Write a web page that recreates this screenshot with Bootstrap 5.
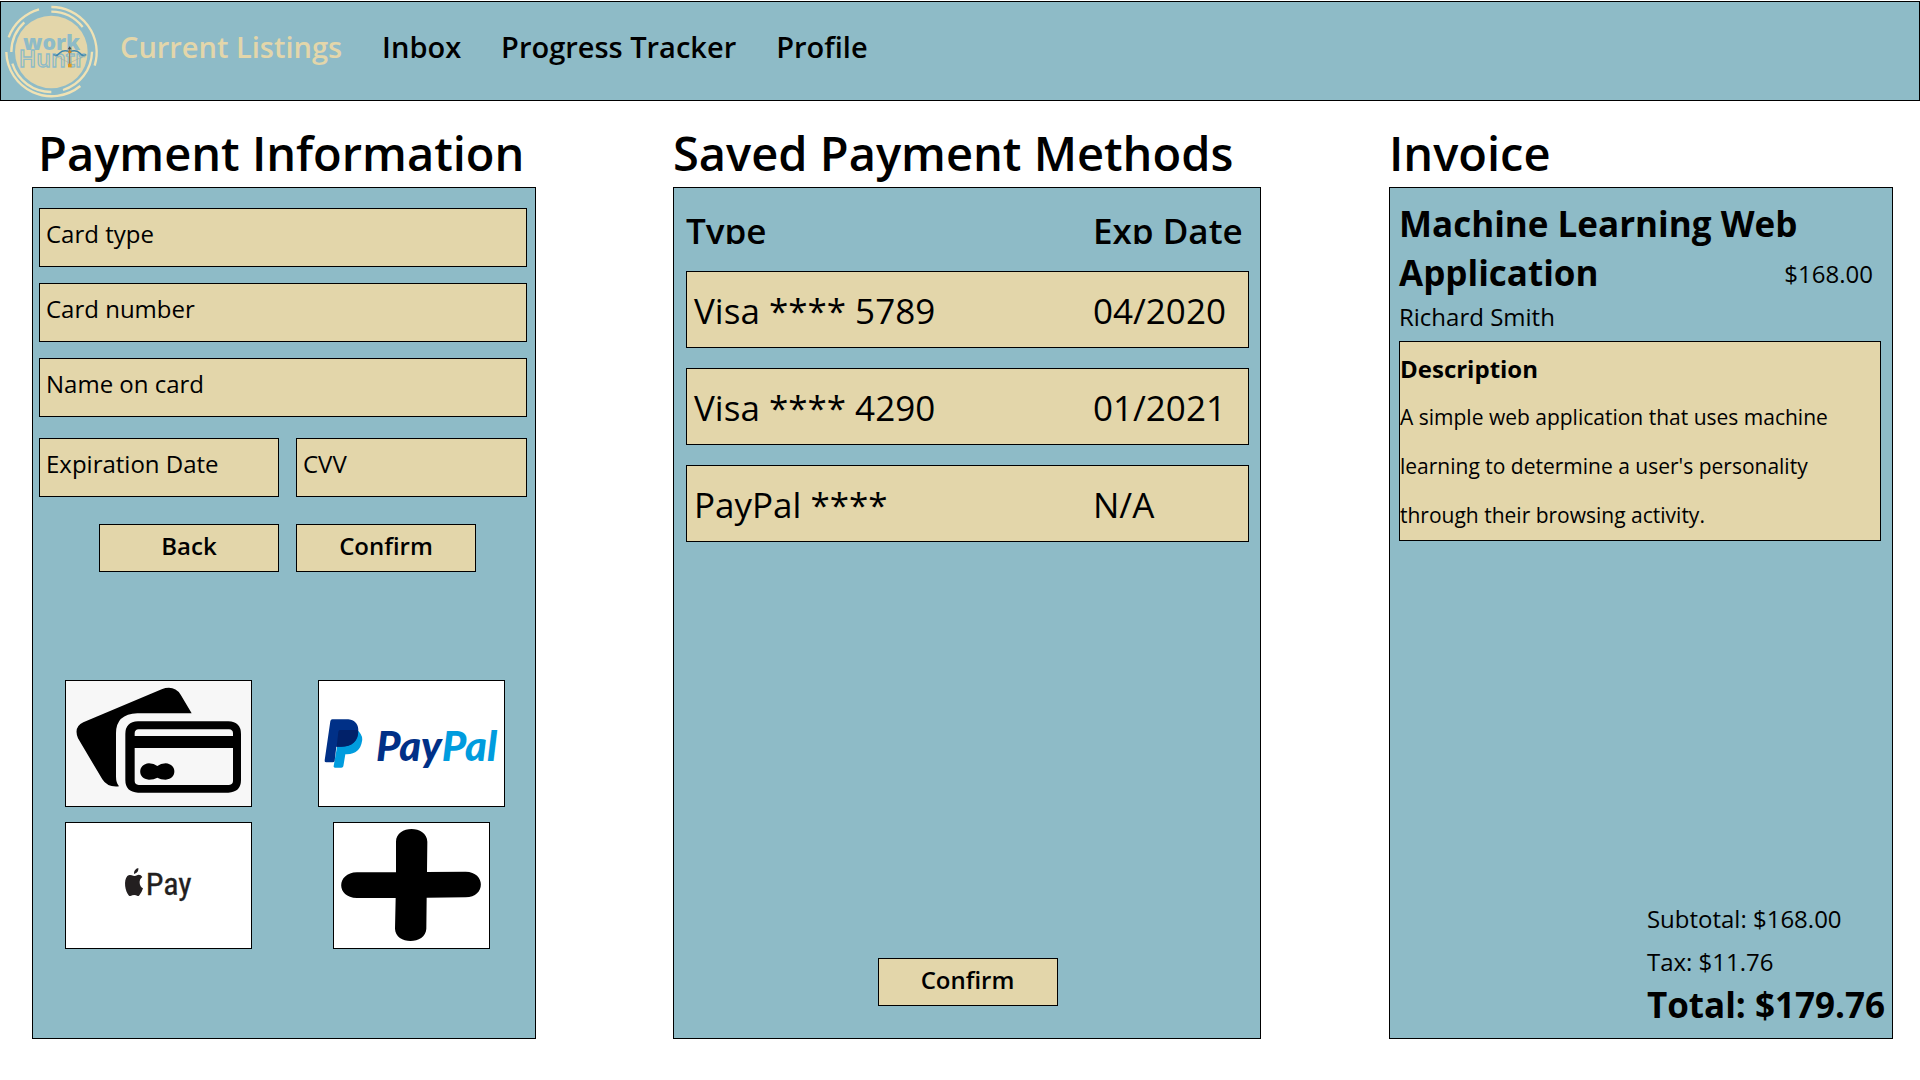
<!DOCTYPE html>
<html lang="en">
<head>
<meta charset="utf-8">
<meta name="viewport" content="width=device-width, initial-scale=1">
<title>workHuntr - Payment</title>
<link href="https://cdn.jsdelivr.net/npm/bootstrap@5.3.0/dist/css/bootstrap.min.css" rel="stylesheet">
<style>
  :root { --teal: #8ebbc7; --sand: #e3d6aa; }
  body { font-family: "Open Sans", "Noto Sans", sans-serif; color: #000; background: #fff; font-size: 24px; line-height: 40px; }
  .site-bar { background: var(--teal); border: 1px solid #000; min-height: 100px; margin-top: 1px; padding: 0 0 0 2px; }
  .site-logo { width: 96px; height: 96px; }
  .site-nav { gap: 40px; margin-left: 21px; padding-bottom: 9px; }
  .site-nav .nav-link { padding: 0; color: #000; font-size: 29px; font-weight: 600; line-height: 40px; }
  .site-nav .nav-link.active { color: var(--sand); }
  .page-main { padding: 20px 27px 42px 32px; }
  .col-side { flex: 504 1 0; min-width: 0; }
  .col-mid { flex: 588 1 0; min-width: 0; margin-left: 137px; margin-right: 128px; }
  .col-title { font-size: 47px; font-weight: 600; line-height: 64px; margin: 0 0 2px; white-space: nowrap; }
  .title-pay { padding-left: 6px; }
  .panel { background: var(--teal); border: 1px solid #000; min-height: calc(100vh - 228px); }
  .panel-pay { padding: 20px 8px 20px 6px; }
  .field, .field:focus { background: var(--sand); border: 1px solid #000; border-radius: 0; height: 59px; padding: 0 8px 8px 6px; font-size: 24px; line-height: 40px; color: #000; box-shadow: none; }
  .field::placeholder { color: #000; opacity: 1; }
  .field-list { gap: 16px; }
  .pair { gap: 17px; }
  .exp-row { padding-top: 5px; }
  .w-exp { flex: 240 1 0; }
  .w-cvv { flex: 231 1 0; }
  .act { background: var(--sand); border: 1px solid #000; border-radius: 0; width: 180px; height: 48px; padding: 0 0 5px; font-size: 24px; font-weight: 600; line-height: 40px; color: #000; }
  .act:hover { background: #d9ca98; border-color: #000; color: #000; }
  .act-row { padding-left: 9px; margin-top: 27px; }
  .tiles { display: grid; grid-template-columns: 187px 187px; gap: 15px 66px; margin-top: 108px; padding-left: 4px; justify-content: center; justify-items: center; }
  .tile { width: 187px; height: 127px; padding: 0; border: 1px solid #000; background: #fff; }
  .tile-plus { width: 157px; }
  .tile-cards { background: #f7f7f7; }
  .tile svg { display: block; width: 100%; height: 100%; }
  .panel-saved { padding: 0 11px 32px 12px; }
  .saved { width: 100%; border-collapse: separate; border-spacing: 0 20px; font-size: 35px; line-height: 73px; }
  .saved th { padding: 0 0 7px; font-weight: 600; }
  .saved th span { display: block; height: 36px; line-height: 46px; overflow: hidden; }
  .saved td { background: var(--sand); border: 1px solid #000; padding: 2px 0 0; }
  .saved td:first-child { border-right: 0; padding-left: 7px; }
  .saved td:last-child { border-left: 0; }
  .saved .exp-col { width: 156px; }
  .panel-inv { padding: 11px 11px 12px 9px; }
  .job { font-size: 35px; font-weight: 700; line-height: 49px; margin: 0; }
  .job .price { font-size: 24px; font-weight: 400; line-height: 51px; height: 49px; margin-right: 8px; }
  .desc { background: var(--sand); border: 1px solid #000; padding: 2px 0 0; margin-top: 4px; font-size: 21px; line-height: 49px; }
  .desc h4 { font-size: 24px; font-weight: 700; line-height: 49px; margin: 0; }
  .sums { margin-right: -4px; line-height: 43px; }
  .sum-total { font-size: 35px; font-weight: 700; }
</style>
<script src="https://cdn.jsdelivr.net/npm/bootstrap@5.3.0/dist/js/bootstrap.bundle.min.js"></script>
</head>
<body>
<header class="site-bar d-flex align-items-center">
  <a href="#" aria-label="workHuntr home" class="d-block">
    <svg class="site-logo d-block" viewBox="10 8 288 288">
      <circle cx="155" cy="155" r="109" fill="#e3d6aa"/>
      <g fill="none" stroke="#f0e2b4" stroke-width="7">
        <path d="M27 111A136 136 0 0 1 118 27"/>
        <path d="M155 20A136 136 0 0 1 285 196"/>
        <path d="M155 34A122 122 0 0 1 249 80"/>
        <path d="M35 155A121 121 0 0 1 74 66"/>
        <path d="M20 155A136 136 0 0 0 242 257"/>
        <path d="M38 190A122 122 0 0 0 155 275"/>
        <path d="M277 154A122 122 0 0 1 190 269"/>
      </g>
      <text x="70" y="148" font-family="Open Sans, sans-serif" font-weight="800" font-size="64" fill="#8ebbc7">work</text>
      <text x="57" y="200" font-family="Open Sans, sans-serif" font-weight="600" font-size="70" fill="#e3d6aa" stroke="#8ebbc7" stroke-width="4">Huntr</text>
      <g fill="none" stroke="#3d86ae" stroke-width="4"><path d="M161 163Q172 169 180 158Q191 147 210 154Q229 147 240 158Q248 169 260 163"/></g>
      <path d="M164 165L210 188L257 165" fill="none" stroke="#9aa59a" stroke-width="1.5"/>
      <path d="M210 142V195" stroke="#9c6a45" stroke-width="3"/>
      <path d="M204 147L210 138L216 147Z" fill="#4b4b4b"/>
      <rect x="206" y="151" width="9" height="7" fill="#c98420"/><rect x="205" y="190" width="11" height="11" fill="#dd9a1c"/>
    </svg>
  </a>
  <nav class="site-nav nav" aria-label="Main">
    <a class="nav-link active" href="#">Current Listings</a>
    <a class="nav-link" href="#">Inbox</a>
    <a class="nav-link" href="#">Progress Tracker</a>
    <a class="nav-link" href="#">Profile</a>
  </nav>
</header>

<main class="page-main d-flex">
  <section class="col-side">
    <h1 class="col-title title-pay">Payment Information</h1>
    <div class="panel panel-pay">
      <form>
        <div class="field-list d-flex flex-column">
          <input class="form-control field" type="text" aria-label="Card type" placeholder="Card type">
          <input class="form-control field" type="text" aria-label="Card number" placeholder="Card number">
          <input class="form-control field" type="text" aria-label="Name on card" placeholder="Name on card">
          <div class="exp-row pair d-flex">
            <div class="w-exp"><input class="form-control field" type="text" aria-label="Expiration Date" placeholder="Expiration Date"></div>
            <div class="w-cvv"><input class="form-control field" type="text" aria-label="CVV" placeholder="CVV"></div>
          </div>
        </div>
        <div class="act-row pair d-flex justify-content-center">
          <button type="button" class="btn act">Back</button>
          <button type="button" class="btn act">Confirm</button>
        </div>
      </form>
      <div class="tiles">
        <button type="button" class="tile tile-cards" aria-label="Credit card">
          <svg viewBox="48 33 555 375">
            <path d="M100 157L335 58Q372 44 392 74L425 130H262Q198 132 198 190V320Q198 338 207 349Q172 353 157 328L84 205Q70 171 100 157Z" fill="#000"/>
            <path fill-rule="evenodd" d="M264 154H535Q573 156 573 192V330Q573 366 535 368H264Q226 366 226 330V192Q226 156 264 154ZM266 178Q254 179 254 190V198H549V190Q549 179 537 178ZM254 234V333Q254 344 266 345H537Q549 344 549 333V234Z" fill="#000"/>
            <path d="M297 280Q312 280 322 288Q332 280 347 280C382 282 382 328 347 329Q332 329 322 323Q312 329 297 329C262 328 262 282 297 280Z" fill="#000"/>
          </svg>
        </button>
        <button type="button" class="tile" aria-label="PayPal">
          <svg viewBox="57 33 555 375">
            <path d="M120 180H172Q190 196 186 214Q180 252 141 253H136L130 289Q129 293 124 293H105Q100 293 101 288Z" fill="#009cde"/>
            <path d="M97 148H145Q177 152 175 187Q170 229 124 230H109L104 272Q103 277 98 277H78Q73 277 74 271L91 154Q92 148 97 148Z" fill="#003087"/>
            <path d="M120 180H174C177 214 155 230 124 230H110L115 185Q116 180 120 180Z" fill="#012169"/>
            <text x="228" y="272" font-family="Lato, sans-serif" font-weight="900" font-style="italic" font-size="125" fill="#003087">Pay<tspan fill="#009cde">Pal</tspan></text>
          </svg>
        </button>
        <button type="button" class="tile" aria-label="Apple Pay">
          <svg viewBox="48 459 555 375">
            <path d="M252 612Q251 598 265 594Q267 608 252 612ZM253 618Q257 618 263 615Q272 613 277 621Q268 627 269 639Q270 651 279 655Q275 669 267 677Q263 679 258 676Q253 674 247 676Q241 679 237 677C225 665 220 631 232 618Q238 613 245 616Q250 618 253 618Z" fill="#231f20"/>
            <text x="287" y="676" font-family="Liberation Sans Narrow, Roboto Condensed, Open Sans Condensed, Roboto, sans-serif" font-size="96" fill="#231f20" stroke="#231f20" stroke-width="1">Pay</text>
          </svg>
        </button>
        <button type="button" class="tile tile-plus" aria-label="Add payment method">
          <svg viewBox="99 459 465 375">
            <path d="M285 515C285 464 378 464 379 515L378 606L494 605C555 606 555 681 494 682L377 683L376 776C374 825 283 825 282 776L284 684L168 684C105 684 105 608 168 607L285 607Z" fill="#000"/>
          </svg>
        </button>
      </div>
    </div>
  </section>

  <section class="col-mid">
    <h1 class="col-title">Saved Payment Methods</h1>
    <div class="panel panel-saved d-flex flex-column">
      <table class="saved">
        <thead><tr><th scope="col"><span>Type</span></th><th scope="col" class="exp-col"><span>Exp Date</span></th></tr></thead>
        <tbody>
          <tr><td>Visa **** 5789</td><td>04/2020</td></tr>
          <tr><td>Visa **** 4290</td><td>01/2021</td></tr>
          <tr><td>PayPal ****</td><td>N/A</td></tr>
        </tbody>
      </table>
      <button type="button" class="btn act mt-auto align-self-center">Confirm</button>
    </div>
  </section>

  <section class="col-side">
    <h1 class="col-title">Invoice</h1>
    <div class="panel panel-inv d-flex flex-column">
      <h2 class="job">Machine Learning Web Application <span class="price float-end">$168.00</span></h2>
      <div>Richard Smith</div>
      <div class="desc">
        <h4>Description</h4>
        <p class="m-0">A simple web application that uses machine learning to determine a user's personality through their browsing activity.</p>
      </div>
      <div class="sums mt-auto align-self-end">
        <div>Subtotal: $168.00</div>
        <div>Tax: $11.76</div>
        <div class="sum-total">Total: $179.76</div>
      </div>
    </div>
  </section>
</main>
</body>
</html>
